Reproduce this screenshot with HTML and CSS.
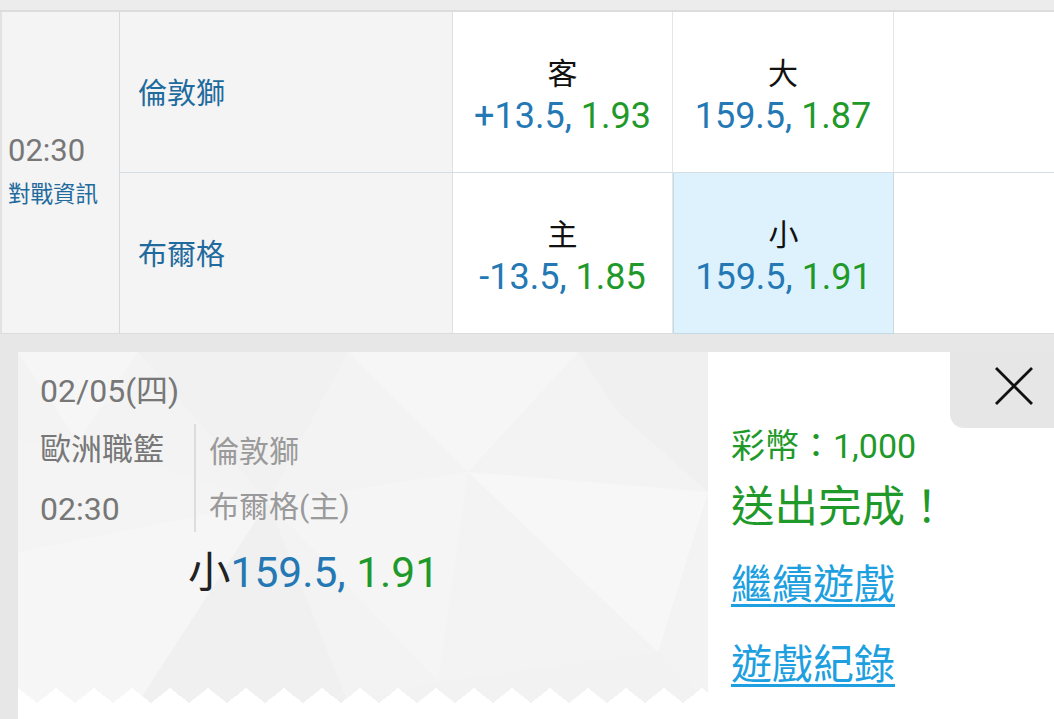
FILE: index.html
```html
<!DOCTYPE html>
<html lang="zh-Hant">
<head>
<meta charset="utf-8">
<title>投注</title>
<link rel="stylesheet" href="styles.css">
</head>
<body>
<div class="topbar"></div>
<div class="table">
  <div class="time-cell">
    <div class="time">02:30</div>
    <a class="info-link">對戰資訊</a>
  </div>
  <div class="team-cell">倫敦獅</div>
  <div class="odds-cell">
    <div class="odds-label">客</div>
    <div class="odds-val"><span class="blue">+13.5,</span> <span class="green">1.93</span></div>
  </div>
  <div class="odds-cell">
    <div class="odds-label">大</div>
    <div class="odds-val"><span class="blue">159.5,</span> <span class="green">1.87</span></div>
  </div>
  <div class="empty-cell"></div>
  <div class="team-cell row2">布爾格</div>
  <div class="odds-cell row2">
    <div class="odds-label">主</div>
    <div class="odds-val"><span class="blue">-13.5,</span> <span class="green">1.85</span></div>
  </div>
  <div class="odds-cell row2 selected">
    <div class="odds-label">小</div>
    <div class="odds-val"><span class="blue">159.5,</span> <span class="green">1.91</span></div>
  </div>
  <div class="empty-cell row2"></div>
</div>
<div class="slip-area">
  <div class="slip">
    <div class="ticket">
      <svg class="ticket-bg" width="690" height="351" viewBox="0 0 690 351" aria-hidden="true">
        <rect width="690" height="351" fill="#f3f3f3"/>
        <polygon points="0,0 120,0 60,90" fill="#f6f6f6"/>
        <polygon points="120,0 330,0 250,150" fill="#f1f1f1"/>
        <polygon points="330,0 560,0 450,120" fill="#f6f6f6"/>
        <polygon points="560,0 690,0 690,140 600,60" fill="#f0f0f0"/>
        <polygon points="450,120 690,140 640,300" fill="#f7f7f7"/>
        <polygon points="250,150 450,120 420,330" fill="#f5f5f5"/>
        <polygon points="0,200 250,150 120,351 0,351" fill="#f6f6f6"/>
        <polygon points="120,351 250,150 330,351" fill="#f0f0f0"/>
        <polygon points="330,351 420,330 640,300 690,351" fill="#f2f2f2"/>
        <polygon points="0,90 60,90 250,150 0,200" fill="#f4f4f4"/>
      </svg>
      <div class="ticket-content">
        <div class="date">02/05(四)</div>
        <div class="match">
          <div class="league">
            <div class="league-name">歐洲職籃</div>
            <div class="league-time">02:30</div>
          </div>
          <div class="teams">
            <div>倫敦獅</div>
            <div>布爾格(主)</div>
          </div>
        </div>
        <div class="bet"><span class="bet-type">小</span><span class="blue">159.5,</span> <span class="green">1.91</span></div>
      </div>
      <div class="zigzag"></div>
    </div>
    <div class="result">
      <div class="close-row">
        <button class="close-btn" aria-label="關閉">
          <svg width="38" height="38" viewBox="0 0 38 38" aria-hidden="true">
            <path d="M1 1 L37 37 M37 1 L1 37" stroke="#111" stroke-width="2.8" fill="none"/>
          </svg>
        </button>
      </div>
      <div class="coins">彩幣：1,000</div>
      <div class="done">送出完成！</div>
      <a class="link first">繼續遊戲</a>
      <a class="link">遊戲紀錄</a>
    </div>
  </div>
</div>
</body>
</html>
```
FILE: styles.css
```css
* { box-sizing: border-box; }
html, body {
  margin: 0;
  padding: 0;
  height: 100%;
  overflow: hidden;
}
body {
  font-family: Roboto, "Noto Sans CJK TC", sans-serif;
  background: #e7e7e7;
  width: 1054px;
  height: 719px;
  display: flex;
  flex-direction: column;
}
.blue { color: #2478b4; }
.green { color: #1f9a2a; }

.topbar {
  height: 12px;
  background: #ececec;
  border-bottom: 2px solid #dcdcdc;
  flex: none;
}

.table {
  display: grid;
  grid-template-columns: 120px 333px 220px 221px 1fr;
  grid-template-rows: 161px 161px;
  flex: none;
  background: #ffffff;
}
.time-cell {
  grid-row: 1 / span 2;
  background: #f4f4f4;
  border-left: 2px solid #e2e2e2;
  border-right: 1px solid #d9d9d9;
  border-bottom: 1px solid #dcdcdc;
  display: flex;
  flex-direction: column;
  justify-content: center;
  padding-left: 6px;
  padding-bottom: 4px;
}
.time {
  font-size: 31px;
  line-height: 36px;
  color: #777777;
}
.info-link {
  font-size: 22.5px;
  line-height: 28px;
  margin-top: 11px;
  color: #1f6b9e;
}
.team-cell {
  background: #f4f4f4;
  border-right: 1px solid #e0e0e0;
  border-bottom: 1px solid #d2dde4;
  display: flex;
  align-items: center;
  padding-left: 18px;
  padding-bottom: 2px;
  font-size: 29px;
  color: #1f6b9e;
}
.team-cell.row2 { border-bottom: 1px solid #dcdcdc; }
.odds-cell {
  background: #ffffff;
  border-right: 1px solid #e2e6e8;
  border-bottom: 1px solid #d2dde4;
  display: flex;
  flex-direction: column;
  align-items: center;
  padding-top: 42px;
}
.odds-cell.row2 { border-bottom: 1px solid #dcdcdc; }
.odds-cell.selected {
  background: #ddf2fc;
  border: 1px solid #c4d9e4;
  border-top: none;
}
.odds-label {
  font-size: 30px;
  line-height: 40px;
  color: #111111;
}
.odds-val {
  font-size: 36px;
  line-height: 44px;
  white-space: nowrap;
}
.empty-cell {
  background: #ffffff;
  border-bottom: 1px solid #d2dde4;
}
.empty-cell.row2 { border-bottom: 1px solid #dcdcdc; }

.slip-area {
  flex: 1;
  padding: 18px 0 0 18px;
  display: flex;
  min-height: 0;
}
.slip {
  flex: 1;
  background: #ffffff;
  display: flex;
  align-items: flex-start;
}
.ticket {
  position: relative;
  width: 690px;
  height: 351px;
  flex: none;
  overflow: hidden;
}
.ticket-bg {
  position: absolute;
  left: 0;
  top: 0;
}
.ticket-content {
  position: relative;
  padding: 19px 0 0 22px;
  color: #777777;
}
.date {
  font-size: 32px;
  line-height: 40px;
}
.match {
  display: flex;
  margin-top: 11px;
}
.league {
  width: 154px;
  font-size: 31px;
}
.league-name { line-height: 56px; }
.league-time { line-height: 62px; font-size: 32px; }
.teams {
  border-left: 2px solid #dddddd;
  padding-left: 13px;
  height: 108px;
  font-size: 30px;
  line-height: 55px;
  color: #9a9a9a;
  margin-top: 2px;
}
.bet {
  margin-top: 8px;
  margin-left: 148px;
  font-size: 42.5px;
  line-height: 50px;
  white-space: nowrap;
}
.bet-type { color: #222222; }
.zigzag {
  position: absolute;
  left: 0;
  right: 0;
  bottom: 0;
  height: 15px;
  background-image: conic-gradient(from 128.3deg at 50% 0, #ffffff 103.4deg, transparent 0);
  background-size: 38px 15px;
  background-position: -19px 0;
  background-repeat: repeat-x;
}

.result {
  flex: 1;
  display: flex;
  flex-direction: column;
  padding-left: 23px;
}
.close-row {
  display: flex;
  justify-content: flex-end;
}
.close-btn {
  width: 104px;
  height: 76px;
  border: none;
  margin: 0;
  background: #e6e6e6;
  border-bottom-left-radius: 14px;
  padding: 15px 0 0 45px;
  display: flex;
  align-items: flex-start;
}
.coins {
  font-size: 34px;
  line-height: 36px;
  color: #1f9a2a;
}
.done {
  font-size: 43.5px;
  line-height: 50px;
  margin-top: 19px;
  color: #1f9a2a;
}
.link {
  font-size: 41px;
  line-height: 48px;
  color: #1e9fe0;
  text-decoration: underline;
  text-decoration-thickness: 3px;
  text-underline-offset: 5px;
  align-self: flex-start;
  margin-top: 32px;
}
.link.first { margin-top: 28px; }
```
